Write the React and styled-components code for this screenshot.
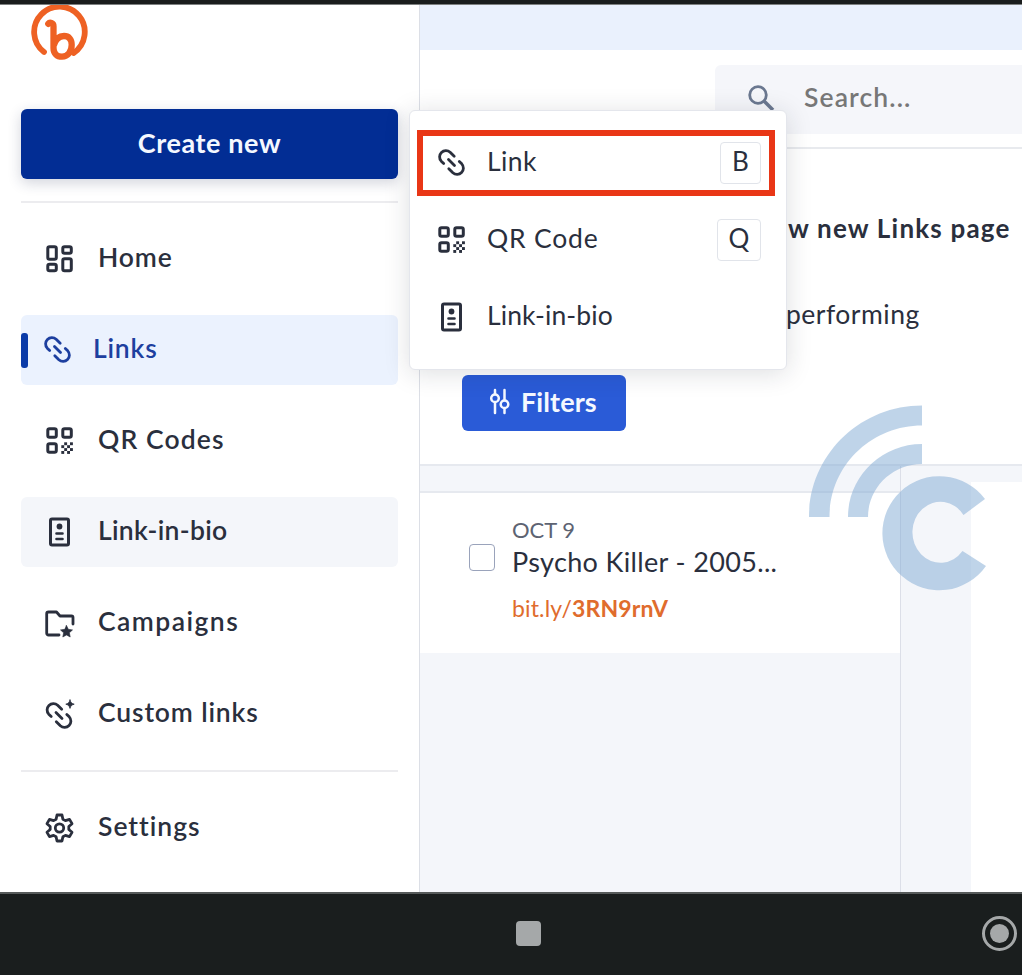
import React from "react";
import styled, { createGlobalStyle } from "styled-components";

const GlobalStyle = createGlobalStyle`
  * { box-sizing: border-box; }
  body {
    margin: 0;
    font-family: Lato, "Open Sans", sans-serif;
    font-variant-ligatures: none;
    color: #2a2f3d;
  }
`;

const Screen = styled.div`
  display: flex;
  flex-direction: column;
  width: 1022px;
  height: 975px;
  overflow: hidden;
  background: #fff;
`;

const StatusStrip = styled.div`
  height: 5px;
  flex-shrink: 0;
  background: #1a1d1d;
  border-bottom: 1px solid #7d8080;
`;

const Main = styled.div`
  display: flex;
  height: 887px;
  position: relative;
`;

const Sidebar = styled.aside`
  display: flex;
  flex-direction: column;
  width: 420px;
  flex-shrink: 0;
  padding: 0 21px;
  border-right: 1px solid #dcdfe6;
`;

const LogoWrap = styled.div`
  height: 104.4px;
  flex-shrink: 0;
  padding-left: 8px;
`;

const CreateButton = styled.button`
  width: 377px;
  height: 70px;
  flex-shrink: 0;
  border: none;
  border-radius: 6px;
  background: #022d94;
  color: #f4f8ff;
  font-family: inherit;
  font-size: 27px;
  font-weight: 700;
  letter-spacing: 0.6px;
  padding: 0 0 4px;
  box-shadow: 0 4px 14px rgba(30, 40, 80, 0.2);
`;

const Divider = styled.hr`
  width: 377px;
  height: 2px;
  flex-shrink: 0;
  border: none;
  background: #ececef;
  margin: ${(p) => p.$margin};
`;

const NavList = styled.nav`
  display: flex;
  flex-direction: column;
  gap: 21px;
`;

const NavItem = styled.a`
  display: flex;
  align-items: center;
  width: 377px;
  height: 70px;
  border-radius: 6px;
  padding-left: ${(p) => (p.$active ? "0" : "23px")};
  background: ${(p) => (p.$active ? "#ebf2fe" : p.$hover ? "#f4f6fa" : "none")};
  color: ${(p) => (p.$active ? "#1d3f9f" : "inherit")};
`;

const ActiveMark = styled.span`
  width: 7px;
  height: 35px;
  border-radius: 3px;
  background: #0b3ba8;
  margin-right: 14px;
`;

const NavLabel = styled.span`
  font-size: 26.5px;
  font-weight: 600;
  line-height: 32px;
  letter-spacing: ${(p) => p.$spacing || 0}px;
  margin-left: ${(p) => p.$gap || 22}px;
  padding-bottom: 4px;
`;

const Content = styled.main`
  display: flex;
  flex-direction: column;
  width: 602px;
`;

const Banner = styled.div`
  height: 45px;
  flex-shrink: 0;
  background: #eaf1fd;
`;

const Header = styled.header`
  display: flex;
  justify-content: flex-end;
  height: 99px;
  flex-shrink: 0;
  padding-top: 15px;
  border-bottom: 2px solid #e8eaee;
`;

const SearchBox = styled.div`
  display: flex;
  align-items: center;
  width: 307px;
  height: 69px;
  padding: 0 0 3px 32px;
  border-radius: 6px 0 0 6px;
  background: #f5f6fa;
  color: #777;
  font-size: 26.5px;
  font-weight: 600;
  letter-spacing: 1.1px;
`;

const SearchText = styled.span`
  margin-left: 29px;
  padding-bottom: 2px;
`;

const Overview = styled.section`
  display: flex;
  flex-direction: column;
  height: 317px;
  flex-shrink: 0;
  border-bottom: 2px solid #e6e9ef;
`;

const Headline = styled.h1`
  margin: 62px 0 0 368px;
  font-size: 26px;
  line-height: 34px;
  font-weight: 700;
  letter-spacing: 1.2px;
  white-space: nowrap;
`;

const Subline = styled.p`
  margin: 52px 0 0 366px;
  font-size: 26.5px;
  line-height: 34px;
  letter-spacing: 0.5px;
`;

const FiltersButton = styled.button`
  display: flex;
  align-items: center;
  width: 164px;
  height: 56px;
  margin: 44px 0 0 42px;
  padding: 0 0 3px 27px;
  border: none;
  border-radius: 6px;
  background: #2a5bd7;
  color: #f4f8ff;
  font-family: inherit;
  font-size: 27px;
  font-weight: 700;
  letter-spacing: 0.1px;
  gap: 11px;
`;

const Columns = styled.div`
  display: flex;
  flex: 1;
  background: #f4f6fa;
`;

const LinkColumn = styled.div`
  width: 481px;
  padding-top: 25px;
  border-right: 1px solid #dcdfe8;
`;

const LinkCard = styled.article`
  display: flex;
  height: 162px;
  padding: 24px 0 0 49px;
  gap: 17px;
  background: #fff;
  border-top: 2px solid #e6e9ef;
`;

const Checkbox = styled.span`
  width: 26px;
  height: 27px;
  margin-top: 27px;
  border: 1.5px solid #9aa3bb;
  border-radius: 4px;
`;

const CardBody = styled.div`
  display: flex;
  flex-direction: column;
`;

const CardDate = styled.span`
  font-size: 22px;
  line-height: 26px;
  color: #5d6372;
`;

const CardTitle = styled.span`
  margin-top: 1px;
  font-size: 27px;
  line-height: 36px;
  letter-spacing: 0.35px;
`;

const CardLink = styled.a`
  margin-top: 13px;
  font-size: 23px;
  line-height: 30px;
  letter-spacing: 0.15px;
  color: #e06c2d;
`;

const Detail = styled.div`
  flex: 1;
  margin: 16px 0 0 70px;
  background: #fff;
`;

const Menu = styled.div`
  position: absolute;
  left: 409px;
  top: 105px;
  width: 378px;
  height: 260px;
  padding: 19px 0 0 7px;
  background: #fff;
  border: 1px solid #e4e6ec;
  border-radius: 6px;
  box-shadow: 0 3px 26px rgba(30, 35, 50, 0.15);
`;

const MenuItem = styled.div`
  display: flex;
  align-items: center;
  width: 358px;
  height: ${(p) => (p.$marked ? 66 : 77)}px;
  padding: 0 ${(p) => (p.$marked ? "8px 0 13px" : "14px 0 19px")};
  margin-bottom: ${(p) => (p.$marked ? 5 : 0)}px;
  border: ${(p) => (p.$marked ? "6px solid #e93616" : "none")};
`;

const MenuLabel = styled.span`
  flex: 1;
  margin-left: 19px;
  padding-bottom: 4px;
  font-size: 26.5px;
  line-height: 32px;
  letter-spacing: ${(p) => p.$spacing || 0}px;
`;

const Key = styled.kbd`
  width: ${(p) => p.$width}px;
  height: 42px;
  border: 1.5px solid #e1e4ea;
  border-radius: 4px;
  font: 26px/36px Lato, sans-serif;
  text-align: center;
`;

const Watermark = styled.svg`
  position: absolute;
  left: 800px;
  top: 395px;
  pointer-events: none;
`;

const AndroidBar = styled.footer`
  display: flex;
  align-items: center;
  justify-content: space-between;
  height: 83px;
  padding: 0 5px 2px 516px;
  background: #1a1e1e;
  border-top: 2px solid #565a5a;
`;

const RecentsButton = styled.span`
  width: 25px;
  height: 25px;
  border-radius: 4px;
  background: #a5a8a9;
`;

const HomeButton = styled.span`
  width: 35px;
  height: 35px;
  padding: 5px;
  border: 3px solid #a5a8a9;
  border-radius: 50%;

  &::before {
    content: "";
    display: block;
    width: 19px;
    height: 19px;
    border-radius: 50%;
    background: #a5a8a9;
  }
`;

const Icon = ({ children, width = 3 }) => (
  <svg
    width="32"
    height="32"
    viewBox="0 0 32 32"
    fill="none"
    stroke="currentColor"
    strokeWidth={width}
    strokeLinecap="round"
    strokeLinejoin="round"
  >
    {children}
  </svg>
);

const BitlyLogo = () => (
  <svg width="62" height="62" viewBox="28.500 5 62 62" fill="none" stroke="#ee6123" strokeLinecap="round">
    <path d="M43.500 52A25.300 25.300 0 1 1 73 53" strokeWidth="5.800" />
    <path
      d="M47.800 23.800c1.500-1.900 5.200-1.300 5.200 2.500V48c0 5.500 3.500 8.700 8.500 8.700 6 0 9.700-5.500 9.700-12 0-5.500-3-8.700-7.700-8.700-5 0-8.500 3.500-10 9"
      strokeWidth="6.300"
    />
  </svg>
);

const HomeIcon = () => (
  <Icon>
    <rect x="3.800" y="3.800" width="8.500" height="12.500" rx="1.800" />
    <rect x="18.800" y="3.800" width="8.500" height="6.500" rx="1.800" />
    <rect x="3.800" y="21.300" width="8.500" height="6.500" rx="1.800" />
    <rect x="18.800" y="15.800" width="8.500" height="12" rx="1.800" />
  </Icon>
);

const chain = (
  <>
    <path d="M7.700 16.600L5.250 14.150A6.300 6.300 0 0 1 14.150 5.250L18.200 9.300" />
    <path d="M12.500 12.500l6 6" />
    <path d="M23.300 14.400L25.750 16.850A6.300 6.300 0 0 1 16.850 25.750L12.800 21.700" />
  </>
);

const LinkIcon = () => <Icon width={2.8}>{chain}</Icon>;

const CustomLinkIcon = () => (
  <Icon width={2.8}>
    <g transform="translate(-0.500 2)">{chain}</g>
    <path
      d="M26 2c.7 2.500 1.600 3.500 4.200 4.200-2.600.7-3.500 1.600-4.200 4.200-.7-2.600-1.600-3.500-4.200-4.200C24.400 5.500 25.300 4.500 26 2z"
      fill="currentColor"
      strokeWidth="0.800"
    />
  </Icon>
);

const checks = [0, 1, 2, 3].flatMap((row) =>
  [0, 1, 2, 3].filter((col) => (row + col) % 2 === 1).map((col) => [col, row])
);

const QrIcon = () => (
  <Icon>
    <rect x="3.800" y="3.800" width="8.500" height="8.500" rx="1.800" />
    <rect x="18.800" y="3.800" width="8.500" height="8.500" rx="1.800" />
    <rect x="3.800" y="18.800" width="8.500" height="8.500" rx="1.800" />
    {checks.map(([col, row]) => (
      <rect
        key={`${col}-${row}`}
        x={17.3 + col * 2.9}
        y={17.3 + row * 2.9}
        width="2.900"
        height="2.900"
        fill="currentColor"
        stroke="none"
      />
    ))}
  </Icon>
);

const BioIcon = () => (
  <Icon>
    <rect x="6.500" y="3" width="18" height="26" rx="1.500" />
    <circle cx="15.500" cy="10.500" r="2.900" fill="currentColor" stroke="none" />
    <path d="M12.500 17.500h6M12.500 23h6" strokeWidth="2.600" />
  </Icon>
);

const CampaignIcon = () => (
  <Icon width={2.8}>
    <path d="M15 28H4.500a1.800 1.800 0 0 1-1.800-1.800V6.800A1.800 1.800 0 0 1 4.500 5h8l3.500 4h11.500a1.500 1.500 0 0 1 1.500 1.500V17" />
    <path
      d="M22.500 18.500l1.800 3.800 4.200.6-3.100 2.900.8 4.200-3.700-2-3.700 2 .8-4.200-3.100-2.900 4.200-.6z"
      fill="currentColor"
      strokeWidth="0.600"
    />
  </Icon>
);

// six teeth, each one the same four corners turned by 60 degrees
const gearPoints = [0, 60, 120, 180, 240, 300]
  .flatMap((deg) => {
    const a = (deg * Math.PI) / 180;
    return [
      [-3.4, -8.8],
      [-2.5, -13],
      [2.5, -13],
      [3.4, -8.8],
    ].map(
      ([x, y]) =>
        `${(15.5 + x * Math.cos(a) - y * Math.sin(a)).toFixed(2)},${(
          16 +
          x * Math.sin(a) +
          y * Math.cos(a)
        ).toFixed(2)}`
    );
  })
  .join(" ");

const GearIcon = () => (
  <Icon width={2.8}>
    <polygon points={gearPoints} />
    <circle cx="15.500" cy="16" r="4.200" />
  </Icon>
);

const SearchIcon = () => (
  <svg width="28" height="28" viewBox="0 0 28 28" fill="none" stroke="#6b7890" strokeWidth="2.800">
    <circle cx="11" cy="11" r="8.300" />
    <path d="M17 17l9 9" strokeWidth="3.500" />
  </svg>
);

const FilterIcon = () => (
  <svg
    width="21"
    height="27"
    viewBox="0 0 21 27"
    fill="none"
    stroke="currentColor"
    strokeWidth="2.500"
    strokeLinecap="round"
  >
    <path d="M6 2v4M6 14.500V25M15.500 2v10M15.500 20.500V25" />
    <circle cx="6" cy="10.200" r="3.800" />
    <circle cx="15.500" cy="16.300" r="3.800" />
  </svg>
);

function App() {
  return (
    <Screen>
      <GlobalStyle />
      <StatusStrip />
      <Main>
        <Sidebar>
          <LogoWrap>
            <BitlyLogo />
          </LogoWrap>
          <CreateButton>Create new</CreateButton>
          <Divider $margin="22px 0 21px" />
          <NavList>
            <NavItem>
              <HomeIcon />
              <NavLabel $spacing={0.9}>Home</NavLabel>
            </NavItem>
            <NavItem $active>
              <ActiveMark />
              <LinkIcon />
              <NavLabel $gap={19} $spacing={0.8}>
                Links
              </NavLabel>
            </NavItem>
            <NavItem>
              <QrIcon />
              <NavLabel $spacing={1.1}>QR Codes</NavLabel>
            </NavItem>
            <NavItem $hover>
              <BioIcon />
              <NavLabel $spacing={0.3}>Link-in-bio</NavLabel>
            </NavItem>
            <NavItem>
              <CampaignIcon />
              <NavLabel $spacing={1.45}>Campaigns</NavLabel>
            </NavItem>
            <NavItem>
              <CustomLinkIcon />
              <NavLabel $spacing={0.85}>Custom links</NavLabel>
            </NavItem>
          </NavList>
          <Divider $margin="21px 0" />
          <NavItem>
            <GearIcon />
            <NavLabel $spacing={1}>Settings</NavLabel>
          </NavItem>
        </Sidebar>

        <Content>
          <Banner />
          <Header>
            <SearchBox>
              <SearchIcon />
              <SearchText>Search...</SearchText>
            </SearchBox>
          </Header>
          <Overview>
            <Headline>w new Links page</Headline>
            <Subline>performing</Subline>
            <FiltersButton>
              <FilterIcon />
              Filters
            </FiltersButton>
          </Overview>
          <Columns>
            <LinkColumn>
              <LinkCard>
                <Checkbox />
                <CardBody>
                  <CardDate>OCT 9</CardDate>
                  <CardTitle>Psycho Killer - 2005...</CardTitle>
                  <CardLink>
                    bit.ly/<strong>3RN9rnV</strong>
                  </CardLink>
                </CardBody>
              </LinkCard>
            </LinkColumn>
            <Detail />
          </Columns>
        </Content>

        <Menu>
          <MenuItem $marked>
            <LinkIcon />
            <MenuLabel $spacing={0.4}>Link</MenuLabel>
            <Key $width={41}>B</Key>
          </MenuItem>
          <MenuItem>
            <QrIcon />
            <MenuLabel $spacing={0.8}>QR Code</MenuLabel>
            <Key $width={44}>Q</Key>
          </MenuItem>
          <MenuItem>
            <BioIcon />
            <MenuLabel $spacing={0.1}>Link-in-bio</MenuLabel>
          </MenuItem>
        </Menu>

        <Watermark width="190" height="200" viewBox="800 400 190 200" fill="rgb(127, 170, 211)" fillOpacity="0.5">
          <path d="M922 405.500C860 405.500 809 455 809 517H829.500C829.500 466 871 425.500 922 425.500Z" />
          <path d="M922 444C881 444 848 477 848 517H868C868 488 892 464 922 464Z" />
          <path d="M985 499A57 57 0 1 0 986 566L962.500 551A28 30.500 0 1 1 963.500 515Z" />
        </Watermark>
      </Main>
      <AndroidBar>
        <RecentsButton />
        <HomeButton />
      </AndroidBar>
    </Screen>
  );
}

export default App;
